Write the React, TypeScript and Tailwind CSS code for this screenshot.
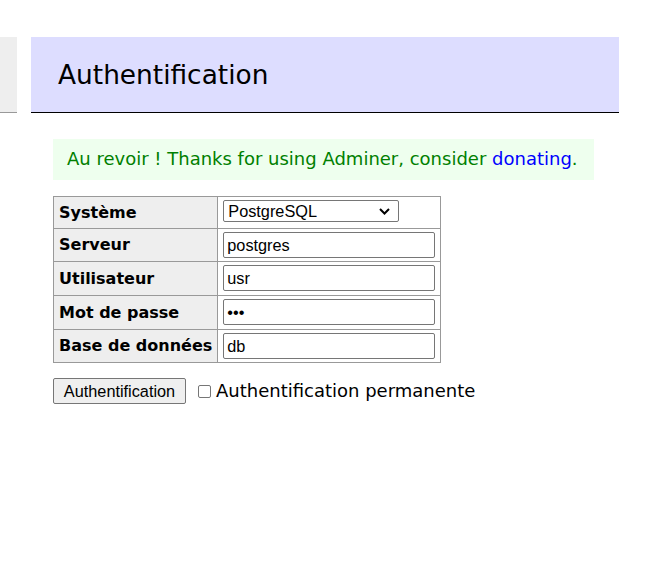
import React from "react";

const rows: { label: string; kind: "select" | "text" | "password"; value: string }[] = [
  { label: "Système", kind: "select", value: "PostgreSQL" },
  { label: "Serveur", kind: "text", value: "postgres" },
  { label: "Utilisateur", kind: "text", value: "usr" },
  { label: "Mot de passe", kind: "password", value: "pas" },
  { label: "Base de données", kind: "text", value: "db" },
];

export default function App() {
  return (
    <div className="min-h-[571px] bg-white text-black font-['DejaVu_Sans',sans-serif] text-[18px] leading-[1.25]">
      <div className="h-[37px]" />
      <div className="flex">
        <div className="w-[17px] h-[76px] bg-[#eee] border-b border-[#999]" />
        <h2 className="ml-[14px] w-[588px] h-[76px] bg-[#ddf] border-b border-black flex items-center pl-[27px] text-[26.4px] font-normal">
          Authentification
        </h2>
      </div>
      <div className="ml-[53px]">
        <div className="mt-[26px] w-[541px] h-[41px] bg-[#efe] text-[#008000] flex items-center px-[14px]">
          <span>
            Au revoir ! Thanks for using Adminer, consider{" "}
            <span className="text-[#00f]">donating</span>.
          </span>
        </div>
        <table className="mt-[16px] border-collapse">
          <tbody>
            {rows.map((r, i) => (
              <tr key={r.label}>
                <th className="border border-[#999] bg-[#eee] text-left font-bold text-[16px] px-[5px] py-[3px] whitespace-nowrap">
                  {r.label}
                </th>
                <td className="border border-[#999] pl-[5px] pr-[4px] py-[3px] w-[223px]">
                  {r.kind === "select" ? (
                    <div className="relative mb-[3px] w-[176px] h-[22px] border border-[#767676] rounded-[2px] bg-white flex items-center pl-[4px] font-['Liberation_Sans',Arial,sans-serif] text-[16.3px]">
                      {r.value}
                      <svg
                        className="absolute right-[8px] top-[7px]"
                        width="11"
                        height="7"
                        viewBox="0 0 11 7"
                        fill="none"
                      >
                        <path d="M1 1l4.5 4.5L10 1" stroke="#000" strokeWidth="2" />
                      </svg>
                    </div>
                  ) : (
                    <input
                      type={r.kind}
                      defaultValue={r.value}
                      className={
                        (i === 2 || i === 3 ? "mb-[1px] " : "") +
                        "block w-[212px] h-[26px] border border-[#767676] rounded-[2px] px-[3px] font-['Liberation_Sans',Arial,sans-serif] text-[16.3px] outline-none"
                      }
                    />
                  )}
                </td>
              </tr>
            ))}
          </tbody>
        </table>
        <div className="mt-[15px] flex items-center">
          <button className="h-[26px] w-[133px] border border-[#767676] rounded-[2px] bg-[#efefef] font-['Liberation_Sans',Arial,sans-serif] text-[16.3px] text-black">
            Authentification
          </button>
          <label className="ml-[12px] flex items-center">
            <span className="w-[13px] h-[13px] border border-[#767676] rounded-[2px] bg-white inline-block" />
            <span className="ml-[5px]">Authentification permanente</span>
          </label>
        </div>
      </div>
    </div>
  );
}
